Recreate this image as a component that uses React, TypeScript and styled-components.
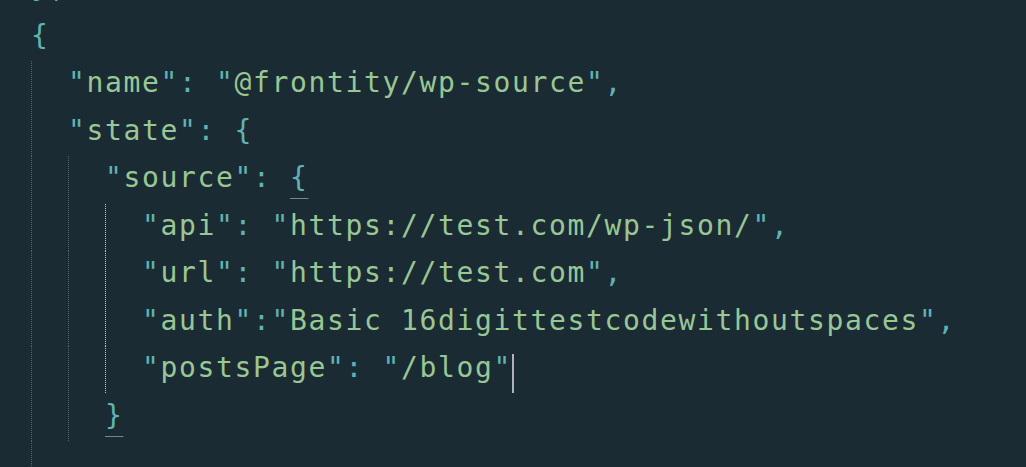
import React from "react";
import styled, { createGlobalStyle } from "styled-components";

const GlobalStyle = createGlobalStyle`
  html, body { margin: 0; padding: 0; background: #1b2b34; }
`;

const Editor = styled.div`
  width: 1026px;
  height: 467px;
  overflow: hidden;
  background: #1b2b34;
  padding-left: 31px;
  box-sizing: border-box;
`;

const Lines = styled.div`
  margin-top: -34px;
  display: flex;
  flex-direction: column;
`;

const Line = styled.div`
  display: flex;
  align-items: flex-start;
  height: 47.5px;
  flex: none;
`;

const Guide = styled.span<{ $active?: boolean }>`
  flex: none;
  align-self: stretch;
  width: 37px;
  background: linear-gradient(
      to bottom,
      ${(p) => (p.$active ? "#e8c46a" : "#56626c")} 50%,
      transparent 50%
    )
    0 0 / 1px 2px repeat-y;
`;

const Code = styled.span`
  font-family: "DejaVu Sans Mono", monospace;
  font-size: 28px;
  letter-spacing: 1.64px;
  line-height: 44.5px;
  white-space: pre;
  color: #99c794;
`;

const Punct = styled.span`
  color: #5fb3b3;
`;

const Str = styled.span`
  color: #99c794;
`;

const Bracket = styled.span`
  color: #5fb3b3;
  text-decoration-line: underline;
  text-decoration-color: #7a848d;
  text-decoration-thickness: 1px;
  text-underline-offset: 11px;
`;

const Cursor = styled.span`
  flex: none;
  align-self: flex-end;
  width: 2px;
  height: 39px;
  margin-bottom: 0.5px;
  background: #aeb3b8;
`;

type Tok = { t: "p" | "s" | "b" | "w"; v: string };
const p = (v: string): Tok => ({ t: "p", v });
const s = (v: string): Tok => ({ t: "s", v });
const b = (v: string): Tok => ({ t: "b", v });
const w = (v: string): Tok => ({ t: "w", v });

type LineData = { guides: ("g" | "y")[]; toks: Tok[]; cursor?: boolean };

const key = (k: string): Tok[] => [p('"'), s(k), p('"'), p(":")];
const val = (v: string): Tok[] => [p('"'), s(v), p('"')];

const data: LineData[] = [
  { guides: [], toks: [p("}"), p(",")] },
  { guides: [], toks: [p("{")] },
  { guides: ["g"], toks: [...key("name"), w(" "), ...val("@frontity/wp-source"), p(",")] },
  { guides: ["g"], toks: [...key("state"), w(" "), p("{")] },
  { guides: ["g", "g"], toks: [...key("source"), w(" "), b("{")] },
  { guides: ["g", "g", "y"], toks: [...key("api"), w(" "), ...val("https://test.com/wp-json/"), p(",")] },
  { guides: ["g", "g", "y"], toks: [...key("url"), w(" "), ...val("https://test.com"), p(",")] },
  { guides: ["g", "g", "y"], toks: [...key("auth"), ...val("Basic 16digittestcodewithoutspaces"), p(",")] },
  { guides: ["g", "g", "y"], toks: [...key("postsPage"), w(" "), ...val("/blog")], cursor: true },
  { guides: ["g", "g"], toks: [b("}")] },
  { guides: ["g"], toks: [] },
];

const renderTok = (tk: Tok, i: number) => {
  if (tk.t === "p") return <Punct key={i}>{tk.v}</Punct>;
  if (tk.t === "s") return <Str key={i}>{tk.v}</Str>;
  if (tk.t === "b") return <Bracket key={i}>{tk.v}</Bracket>;
  return <React.Fragment key={i}>{tk.v}</React.Fragment>;
};

export default function App() {
  return (
    <>
      <GlobalStyle />
      <Editor>
        <Lines>
          {data.map((ln, i) => (
            <Line key={i}>
              {ln.guides.map((g, j) => (
                <Guide key={j} $active={g === "y"} />
              ))}
              <Code>{ln.toks.map(renderTok)}</Code>
              {ln.cursor && <Cursor />}
            </Line>
          ))}
        </Lines>
      </Editor>
    </>
  );
}
